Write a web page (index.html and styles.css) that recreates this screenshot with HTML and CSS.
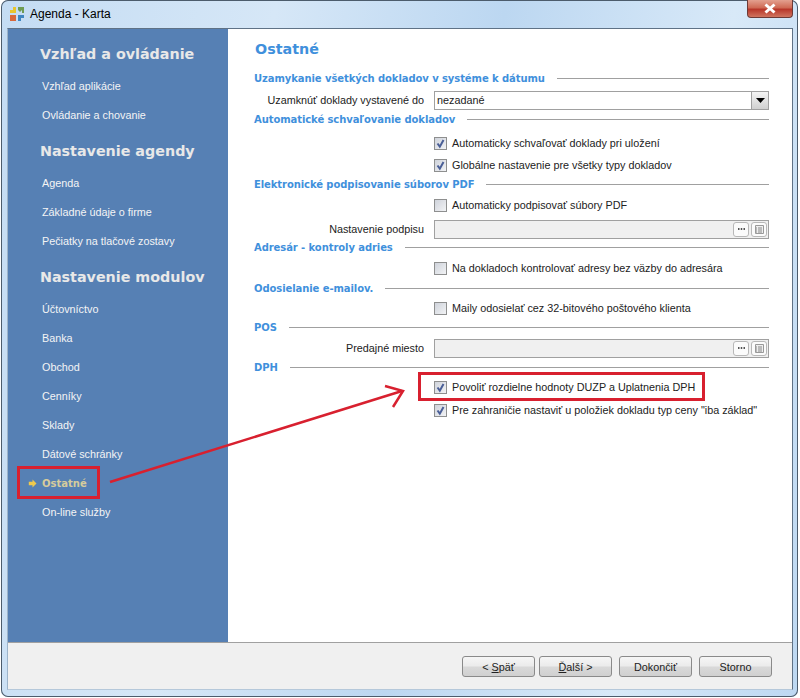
FILE: index.html
```html
<!DOCTYPE html>
<html lang="sk">
<head>
<meta charset="utf-8">
<title>Agenda - Karta</title>
<link rel="stylesheet" href="styles.css">
</head>
<body>
<div class="window">
  <header class="titlebar">
    <svg class="app-icon" width="16" height="16" viewBox="0 0 16 16">
      <path d="M1 7V4h3V1h3v6z" fill="#e8c52c"/>
      <path d="M9 1h6v6h-2V4l-2 2-2-2z" fill="#6f9c52"/>
      <path d="M1 9h6v6H1z" fill="#d8683a"/>
      <path d="M9 9h6v3h-3v3H9z" fill="#3f86c0"/>
    </svg>
    <span class="title-text">Agenda - Karta</span>
    <div class="close-btn"><svg width="14" height="11" viewBox="0 0 14 11"><path d="M2.500 1.500l9 8M11.500 1.500l-9 8" stroke="#fff" stroke-width="3"/></svg></div>
  </header>
  <div class="client">
    <div class="body">
      <nav class="sidebar">
        <h2 class="nav-head">Vzhľad a ovládanie</h2>
        <a class="nav-item">Vzhľad aplikácie</a>
        <a class="nav-item">Ovládanie a chovanie</a>
        <h2 class="nav-head nav-head-next">Nastavenie agendy</h2>
        <a class="nav-item">Agenda</a>
        <a class="nav-item">Základné údaje o firme</a>
        <a class="nav-item">Pečiatky na tlačové zostavy</a>
        <h2 class="nav-head nav-head-next">Nastavenie modulov</h2>
        <a class="nav-item">Účtovníctvo</a>
        <a class="nav-item">Banka</a>
        <a class="nav-item">Obchod</a>
        <a class="nav-item">Cenníky</a>
        <a class="nav-item">Sklady</a>
        <a class="nav-item">Dátové schránky</a>
        <a class="nav-item active">
          <svg class="nav-arrow" width="9" height="9" viewBox="0 0 9 9"><path d="M4.500 .5L8.500 4.500 4.500 8.500V6.300H.8V2.700h3.700z" fill="#efc94c"/></svg>
          Ostatné
        </a>
        <a class="nav-item">On-line služby</a>
      </nav>
      <main class="content">
        <h1 class="page-title">Ostatné</h1>
        <div class="form">
          <div class="row group"><span>Uzamykanie všetkých dokladov v systéme k dátumu</span></div>
          <div class="row g6 field"><label class="field-label">Uzamknúť doklady vystavené do</label>
            <div class="select"><span class="select-value">nezadané</span><span class="select-btn"><svg width="9" height="5" viewBox="0 0 9 5"><path d="M0 0h9L4.500 5z" fill="#000"/></svg></span></div>
          </div>
          <div class="row g3 group"><span>Automatické schvaľovanie dokladov</span></div>
          <div class="row g8 check"><span class="box"><svg width="13" height="13" viewBox="0 0 13 13"><path d="M3.500 6.500l2.300 3.200L9.500 3" class="tick"/></svg></span>Automaticky schvaľovať doklady pri uložení</div>
          <div class="row g6 check"><span class="box"><svg width="13" height="13" viewBox="0 0 13 13"><path d="M3.500 6.500l2.300 3.200L9.500 3" class="tick"/></svg></span>Globálne nastavenie pre všetky typy dokladov</div>
          <div class="row g3 group"><span>Elektronické podpisovanie súborov PDF</span></div>
          <div class="row g5 check"><span class="box"></span>Automaticky podpisovať súbory PDF</div>
          <div class="row g8 field"><label class="field-label">Nastavenie podpisu</label>
            <div class="picker"><span class="mini-btn"><svg width="7" height="2" viewBox="0 0 7 2"><path d="M0 0h1.500v2H0zM2.750 0h1.500v2h-1.500zM5.500 0H7v2H5.500z" fill="#555"/></svg></span><span class="mini-btn"><svg width="11" height="11" viewBox="0 0 11 11"><path d="M1.500 1.500h8v8h-8z" fill="#eee" stroke="#999"/><path d="M4 4h4M4 6h4M4 8h4M2 4h1M2 6h1M2 8h1" stroke="#888"/></svg></span></div>
          </div>
          <div class="row g2 group"><span>Adresár - kontroly adries</span></div>
          <div class="row g5 check"><span class="box"></span>Na dokladoch kontrolovať adresy bez väzby do adresára</div>
          <div class="row g4 group"><span>Odosielanie e-mailov.</span></div>
          <div class="row g4 check"><span class="box"></span>Maily odosielať cez 32-bitového poštového klienta</div>
          <div class="row g3 group"><span>POS</span></div>
          <div class="row g5 field"><label class="field-label">Predajné miesto</label>
            <div class="picker"><span class="mini-btn"><svg width="7" height="2" viewBox="0 0 7 2"><path d="M0 0h1.500v2H0zM2.750 0h1.500v2h-1.500zM5.500 0H7v2H5.500z" fill="#555"/></svg></span><span class="mini-btn"><svg width="11" height="11" viewBox="0 0 11 11"><path d="M1.500 1.500h8v8h-8z" fill="#eee" stroke="#999"/><path d="M4 4h4M4 6h4M4 8h4M2 4h1M2 6h1M2 8h1" stroke="#888"/></svg></span></div>
          </div>
          <div class="row g3 group"><span>DPH</span></div>
          <div class="row g4 check"><span class="box"><svg width="13" height="13" viewBox="0 0 13 13"><path d="M3.500 6.500l2.300 3.200L9.500 3" class="tick"/></svg></span>Povoliť rozdielne hodnoty DUZP a Uplatnenia DPH</div>
          <div class="row g7 check"><span class="box"><svg width="13" height="13" viewBox="0 0 13 13"><path d="M3.500 6.500l2.300 3.200L9.500 3" class="tick"/></svg></span>Pre zahraničie nastaviť u položiek dokladu typ ceny "iba základ"</div>
        </div>
      </main>
    </div>
    <footer class="footer">
      <button class="btn">&lt; <u>S</u>päť</button>
      <button class="btn"><u>Ď</u>alší &gt;</button>
      <button class="btn btn-wide">Dokončiť</button>
      <button class="btn btn-wide">Storno</button>
    </footer>
  </div>
  <svg class="annotation" width="800" height="698" viewBox="0 0 800 698">
    <g fill="none" stroke="#d8202f">
      <rect x="18.500" y="467.500" width="80" height="30" stroke-width="3"/>
      <rect x="419.500" y="373.500" width="284" height="26" stroke-width="3"/>
      <path d="M110 482L402 391" stroke-width="2.500"/>
      <path d="M385 386L403 391 393 407" stroke-width="2.500"/>
    </g>
  </svg>
</div>
</body>
</html>
```
FILE: styles.css
```css
html, body { margin: 0; padding: 0; }
body { width: 800px; height: 698px; overflow: hidden; background: #fff; font-family: Tahoma, "Liberation Sans", sans-serif; font-size: 10.800px; color: #222; }
.window { position: relative; width: 797px; height: 697px; margin-left: 1px; box-sizing: border-box; padding: 0 5px 7px 6px; display: flex; flex-direction: column; background: linear-gradient(100deg, #c4dcf3 0%, #d6e7f7 30%, #bcd7f1 55%, #d8e9f8 80%, #bdd8f2 100%); border-radius: 7px; box-shadow: inset 0 0 0 1px #4c5c6c; }
.titlebar { height: 28px; flex: none; display: flex; align-items: center; position: relative; }
.app-icon { margin-left: 2px; margin-right: 5px; }
.title-text { font-size: 12px; color: #000; }
.close-btn { position: absolute; right: 0; top: 0; width: 46px; height: 18px; display: flex; align-items: center; justify-content: center; border: 1px solid #6d3a36; border-top: none; border-radius: 0 0 4px 4px; background: linear-gradient(#e3a08f 0%, #cf6a55 45%, #b8372a 55%, #d0745f 100%); box-sizing: border-box; }
.client { flex: 1; display: flex; flex-direction: column; border: 1px solid #5f7286; border-left-color: #9db4ca; border-bottom-color: #b5c8da; background: #f0f0f0; }
.body { flex: 1; display: flex; background: #fff; border-bottom: 1px solid #a0a0a0; }
.sidebar { width: 220px; flex: none; background: #5680b4; padding-top: 11px; box-sizing: border-box; display: flex; flex-direction: column; }
.nav-head { margin: 0 0 3px; height: 29px; line-height: 29px; padding-left: 32px; font-family: "DejaVu Sans", sans-serif; font-weight: bold; font-size: 14.300px; color: #e8e8e8; }
.nav-head-next { margin-top: 7px; }
.nav-item { height: 29px; line-height: 29px; padding-left: 34px; color: #f4f4f4; position: relative; }
.nav-item.active { font-weight: bold; color: #d6cc9c; font-family: "DejaVu Sans", sans-serif; font-size: 10px; }
.nav-arrow { position: absolute; left: 20px; top: 10px; }
.content { flex: 1; padding: 10px 23px 0 26px; min-width: 0; }
.page-title { margin: 0; height: 21px; line-height: 21px; font-family: "DejaVu Sans", sans-serif; font-size: 14.300px; font-weight: bold; color: #3f90dc; padding-left: 1px; }
.form { margin-top: 10px; display: flex; flex-direction: column; }
.row { height: 16px; display: flex; align-items: center; flex: none; }
.g2 { margin-top: 2px; } .g3 { margin-top: 3px; } .g4 { margin-top: 4px; } .g5 { margin-top: 5px; } .g6 { margin-top: 6px; } .g7 { margin-top: 7px; } .g8 { margin-top: 8px; }
.group { font-family: "DejaVu Sans", sans-serif; font-weight: bold; font-size: 10px; letter-spacing: -0.080px; color: #3f90dc; }
.group::after { content: ""; flex: 1; height: 1px; background: #a0a0a0; margin-left: 12px; }
.field-label { width: 170px; text-align: right; flex: none; }
.select, .picker { height: 19px; margin-left: 10px; flex: 1; box-sizing: border-box; border: 1px solid #a0a0a0; display: flex; align-items: center; }
.select { background: #fff; }
.select-value { flex: 1; padding-left: 2px; }
.select-btn { width: 16px; height: 17px; display: flex; align-items: center; justify-content: center; border-left: 1px solid #a0a0a0; background: linear-gradient(#f4f4f4, #d0d0d0); }
.picker { background: #f0f0f0; justify-content: flex-end; gap: 2px; padding-right: 1px; }
.mini-btn { width: 16px; height: 15px; box-sizing: border-box; border: 1px solid #b8b8b8; border-radius: 3px; background: #fbfbfb; display: flex; align-items: center; justify-content: center; }
.check { padding-left: 180px; }
.box { width: 13px; height: 13px; margin-right: 5px; flex: none; border: 1px solid #8e8f8f; background: linear-gradient(135deg, #cfd3db, #f2f3f5); display: block; box-sizing: border-box; position: relative; }
.box svg { position: absolute; left: -1px; top: -1px; }
.tick { fill: none; stroke: #4a5f97; stroke-width: 2; }
.footer { height: 46px; flex: none; display: flex; align-items: center; justify-content: flex-end; padding: 1px 20px 0 0; box-sizing: border-box; }
.btn { width: 73px; height: 21px; padding: 0; margin-left: 4px; font: inherit; color: #222; border: 1px solid #8a8a8a; border-radius: 3px; background: linear-gradient(#f6f6f6 0%, #ebebeb 48%, #d9d9d9 52%, #d0d0d0 100%); }
.btn-wide { margin-left: 7px; }
.annotation { position: absolute; left: -1px; top: 0; pointer-events: none; }
```
